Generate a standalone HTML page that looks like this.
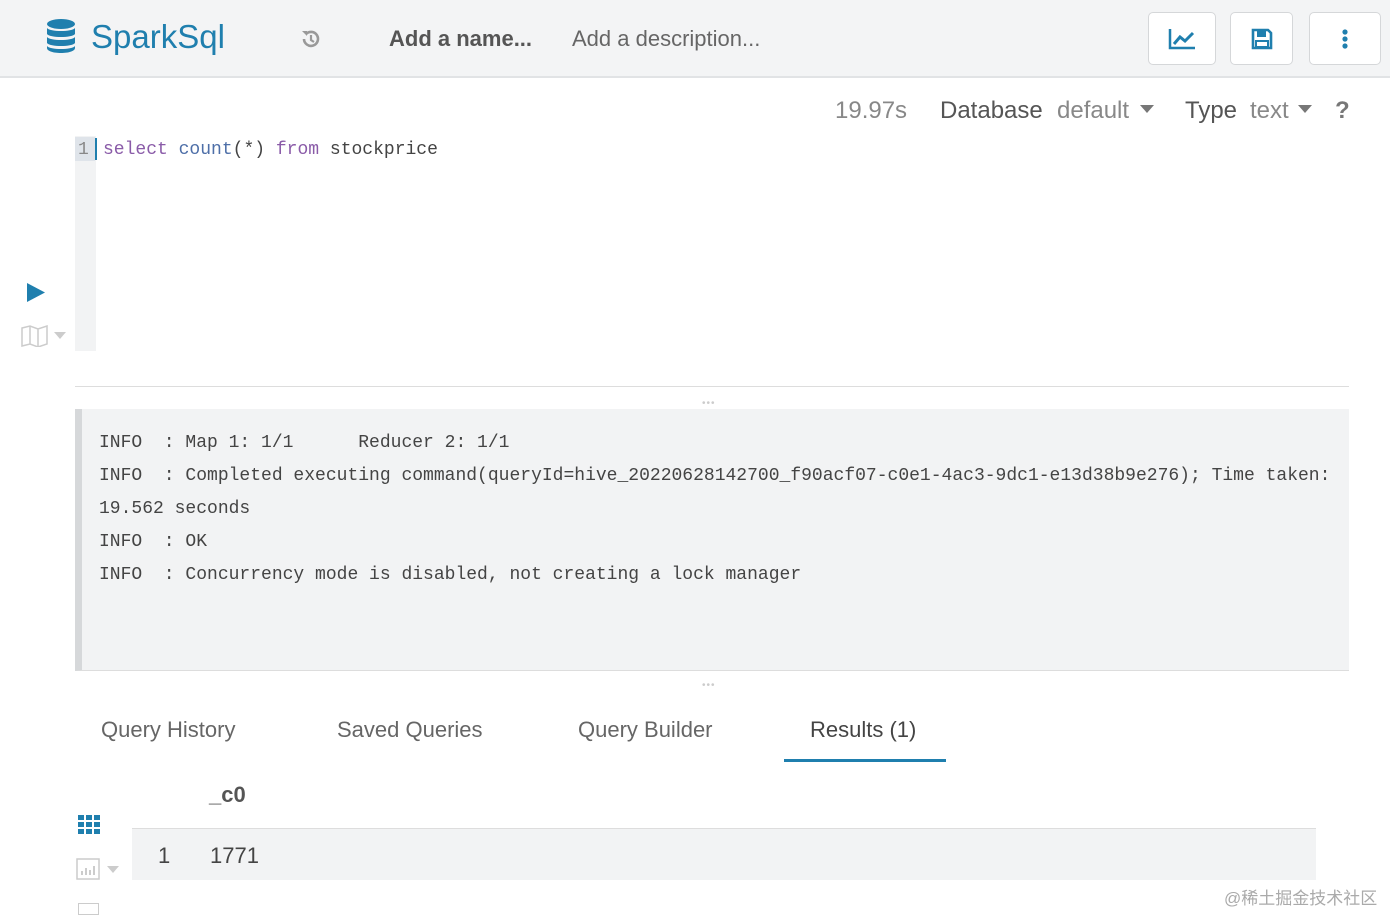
<!DOCTYPE html>
<html><head><meta charset="utf-8"><style>
*{box-sizing:border-box;margin:0;padding:0}
body{width:1390px;height:912px;overflow:hidden;background:#fff;font-family:"Liberation Sans",sans-serif;position:relative;color:#444}
.abs{position:absolute}
.hdr{left:0;top:0;width:1390px;height:78px;background:#f3f4f5;border-bottom:2px solid #e1e3e5}
.btn{top:12px;height:53px;background:#fff;border:1px solid #d5d7d9;border-radius:5px;display:flex;align-items:center;justify-content:center}
.mono{font-family:"Liberation Mono",monospace;font-size:18px}
.log div{height:33px;line-height:33px;white-space:pre}
.tab{top:717px;font-size:22px;color:#666}
</style></head><body>
<div class="abs hdr"></div>
<svg class="abs" style="left:46px;top:19px" width="30" height="34" viewBox="0 0 30 34"><g fill="#1f7fae"><ellipse cx="15" cy="5" rx="14" ry="5"/><path d="M1 9c3 4 25 4 28 0v6c-3 4-25 4-28 0z"/><path d="M1 18c3 4 25 4 28 0v6c-3 4-25 4-28 0z"/><path d="M1 27c3 4 25 4 28 0v2c0 3-6 5-14 5S1 32 1 29z"/></g></svg>
<div class="abs" style="left:91px;top:18px;font-size:33px;color:#1f7fae">SparkSql</div>
<svg class="abs" style="left:300px;top:28px" width="22" height="22" viewBox="0 0 22 22"><path d="M4 11a7 7 0 1 0 2-5" fill="none" stroke="#999" stroke-width="2.6"/><path d="M2 3l5 0 0 5z" fill="#999"/><path d="M11 7v5l3 2" fill="none" stroke="#999" stroke-width="2.2"/></svg>
<div class="abs" style="left:389px;top:26px;font-size:22px;font-weight:bold;color:#555">Add a name...</div>
<div class="abs" style="left:572px;top:26px;font-size:22px;color:#666">Add a description...</div>
<div class="abs btn" style="left:1148px;width:68px"><svg width="28" height="22" viewBox="0 0 28 22"><path d="M2 1v19h25" fill="none" stroke="#1f7fae" stroke-width="2.5"/><path d="M6 16l6-7 5 4 8-8" fill="none" stroke="#1f7fae" stroke-width="3"/></svg></div>
<div class="abs btn" style="left:1230px;width:63px"><svg width="22" height="22" viewBox="0 0 22 22"><path d="M2 2h15l3 3v15H2z" fill="none" stroke="#1f7fae" stroke-width="2.6"/><rect x="6" y="3" width="9" height="6" fill="#1f7fae"/><rect x="5" y="13" width="12" height="6" fill="#fff" stroke="#1f7fae" stroke-width="2"/></svg></div>
<div class="abs btn" style="left:1309px;width:72px"><svg width="8" height="20" viewBox="0 0 8 20"><circle cx="4" cy="3" r="2.6" fill="#1f7fae"/><circle cx="4" cy="10" r="2.6" fill="#1f7fae"/><circle cx="4" cy="17" r="2.6" fill="#1f7fae"/></svg></div>

<div class="abs" style="left:835px;top:97px;font-size:24px;color:#888">19.97s</div>
<div class="abs" style="left:940px;top:97px;font-size:24px;color:#555">Database</div>
<div class="abs" style="left:1057px;top:97px;font-size:24px;color:#888">default</div>
<div class="abs" style="left:1140px;top:105px;border:7px solid transparent;border-top:8px solid #777"></div>
<div class="abs" style="left:1185px;top:97px;font-size:24px;color:#555">Type</div>
<div class="abs" style="left:1250px;top:97px;font-size:24px;color:#888">text</div>
<div class="abs" style="left:1298px;top:105px;border:7px solid transparent;border-top:8px solid #777"></div>
<div class="abs" style="left:1335px;top:97px;font-size:24px;font-weight:bold;color:#777">?</div>

<div class="abs" style="left:75px;top:136px;width:21px;height:215px;background:#f2f3f4"></div>
<div class="abs" style="left:75px;top:137px;width:20px;height:24px;background:#dfe4ea"></div>
<div class="abs" style="left:95px;top:138px;width:2px;height:22px;background:#1f7fae"></div>
<div class="abs mono" style="left:78px;top:140px;color:#888">1</div>
<div class="abs mono" style="left:103px;top:140px;white-space:pre"><span style="color:#8a5ba8">select</span> <span style="color:#4e6fa8">count</span><span style="color:#444">(*)</span> <span style="color:#8a5ba8">from</span> <span style="color:#444">stockprice</span></div>

<svg class="abs" style="left:27px;top:283px" width="18" height="19"><path d="M0 0L18 9.5 0 19z" fill="#1f7fae"/></svg>
<svg class="abs" style="left:21px;top:325px" width="28" height="22" viewBox="0 0 28 22"><path d="M1 3l8-2 8 3 9-3v18l-9 3-8-3-8 2z M9 1v18 M17 4v18" fill="none" stroke="#ccc" stroke-width="1.5"/></svg>
<div class="abs" style="left:54px;top:332px;border:6px solid transparent;border-top:7px solid #ccc"></div>

<div class="abs" style="left:75px;top:386px;width:1274px;height:1px;background:#ddd"></div>
<div class="abs" style="left:702px;top:398px;color:#ccc;font-size:10px;letter-spacing:1px">•••</div>
<div class="abs" style="left:75px;top:409px;width:1274px;height:262px;background:#f2f3f4;border-left:7px solid #d6d8da;border-bottom:1px solid #ddd"></div>
<div class="abs mono log" style="left:99px;top:427px;color:#444">
<div>INFO  : Map 1: 1/1      Reducer 2: 1/1</div>
<div>INFO  : Completed executing command(queryId=hive_20220628142700_f90acf07-c0e1-4ac3-9dc1-e13d38b9e276); Time taken:</div>
<div>19.562 seconds</div>
<div>INFO  : OK</div>
<div>INFO  : Concurrency mode is disabled, not creating a lock manager</div>
</div>
<div class="abs" style="left:702px;top:680px;color:#ccc;font-size:10px;letter-spacing:1px">•••</div>

<div class="abs tab" style="left:101px">Query History</div>
<div class="abs tab" style="left:337px">Saved Queries</div>
<div class="abs tab" style="left:578px">Query Builder</div>
<div class="abs tab" style="left:810px;color:#444">Results (1)</div>
<div class="abs" style="left:784px;top:759px;width:162px;height:3px;background:#1f7fae"></div>

<div class="abs" style="left:209px;top:782px;font-size:22px;font-weight:bold;color:#555">_c0</div>
<svg class="abs" style="left:78px;top:815px" width="22" height="19"><g fill="#1f7fae"><rect x="0" y="0" width="6" height="5"/><rect x="8" y="0" width="6" height="5"/><rect x="16" y="0" width="6" height="5"/><rect x="0" y="7" width="6" height="5"/><rect x="8" y="7" width="6" height="5"/><rect x="16" y="7" width="6" height="5"/><rect x="0" y="14" width="6" height="5"/><rect x="8" y="14" width="6" height="5"/><rect x="16" y="14" width="6" height="5"/></g></svg>
<div class="abs" style="left:132px;top:828px;width:1184px;height:52px;background:#f2f3f4;border-top:1px solid #ddd"></div>
<div class="abs" style="left:158px;top:843px;font-size:22px;color:#444">1</div>
<div class="abs" style="left:210px;top:843px;font-size:22px;color:#444">1771</div>
<svg class="abs" style="left:76px;top:858px" width="24" height="22"><rect x="1" y="1" width="22" height="20" fill="none" stroke="#ccc" stroke-width="1.5"/><path d="M6 17v-4M10 17v-7M14 17v-5M18 17v-9" stroke="#ccc" stroke-width="2"/></svg>
<div class="abs" style="left:107px;top:866px;border:6px solid transparent;border-top:7px solid #ccc"></div>
<div class="abs" style="left:78px;top:903px;width:21px;height:12px;border:1.5px solid #ccc"></div>
<div class="abs" style="left:1224px;top:884px;font-size:17px;color:#aaa;font-family:'Liberation Sans','Noto Sans CJK SC',sans-serif">@稀土掘金技术社区</div>
</body></html>
